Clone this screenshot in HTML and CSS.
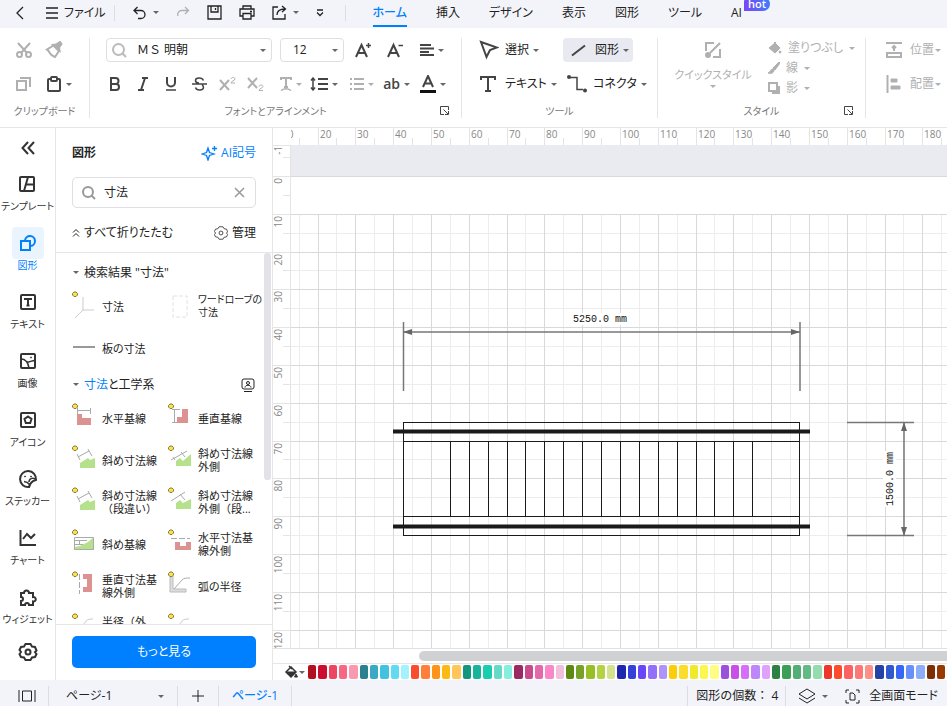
FILE: index.html
```html
<!DOCTYPE html>
<html lang="ja">
<head>
<meta charset="utf-8">
<title>ページ-1</title>
<link rel="stylesheet" href="styles.css">
</head>
<body>
<header class="topbar">
  <button class="tb back" aria-label="戻る"><svg width="10" height="14"><path d="M8 1 2 7l6 6"/></svg></button>
  <button class="tb file"><svg width="12" height="12"><path d="M0 1h12M0 6h12M0 11h12"/></svg>ファイル</button>
  <span class="sep"></span>
  <div class="quick">
    <button class="tb" aria-label="元に戻す"><svg width="14" height="14"><path d="M4.500 1 1 4.500 4.500 8M1 4.500h7a4 4 0 0 1 0 8H5"/></svg><i class="caret"></i></button>
    <button class="tb off" aria-label="やり直し"><svg width="14" height="14"><path d="M9 1l3.500 3.500L9 8M12.500 4.500H6a4 4 0 0 0-4 5.500"/></svg></button>
    <button class="tb" aria-label="保存"><svg width="15" height="15"><path d="M1 1h13v13H1zM4 1v6h7V1M8.500 3v2"/></svg></button>
    <button class="tb" aria-label="印刷"><svg width="16" height="15"><path d="M4 4V1h8v3M4 11H1V4h14v7h-3M4 8.500h8V14H4zM11 6.500h2"/></svg></button>
    <button class="tb" aria-label="書き出し"><svg width="15" height="15"><path d="M6 2H1v12h12V9M5 10c0-4 3-6 8-6M10 1l3.500 3L10 7"/></svg><i class="caret"></i></button>
    <button class="tb" aria-label="その他"><svg width="8" height="8"><path d="M1 1h6M1 3.500l3 3 3-3"/></svg></button>
  </div>
  <span class="sep"></span>
  <nav class="tabs">
    <a href="#" class="active">ホーム</a><a href="#">挿入</a><a href="#">デザイン</a><a href="#">表示</a><a href="#">図形</a><a href="#">ツール</a><a href="#" class="ai">AI<span class="hot">hot</span></a>
  </nav>
</header>

<section class="ribbon">
  <div class="group clip">
    <div class="row">
      <button class="ic off" aria-label="切り取り"><svg width="18" height="18" class="b"><circle cx="4.500" cy="13.500" r="2.500"/><circle cx="13.500" cy="13.500" r="2.500"/><path d="M3 2l9 10M15 2 6 12"/></svg></button>
      <button class="ic off" aria-label="書式のコピー"><svg width="18" height="18" class="b"><path d="M8.500 4.500 2 8.500c2 1 2 3 4 5 1 1 3 2 4 2.500l4-6z"/><path class="f" d="M8 4l3-.5L15 1l1.500 2L14 6.500l.5 3z"/></svg></button>
    </div>
    <div class="row">
      <button class="ic off" aria-label="コピー"><svg width="16" height="16" class="b"><path d="M1 5h9v9H1zM4 2h10v9"/></svg></button>
      <button class="ic" aria-label="貼り付け"><svg width="16" height="16" class="b"><rect x="2" y="3" width="12" height="12" rx="1"/><rect x="5" y="1" width="6" height="4" rx="1" fill="#fff"/></svg><i class="caret"></i></button>
    </div>
    <div class="foot">クリップボード</div>
  </div>

  <div class="group font">
    <div class="row">
      <label class="combo family"><svg width="15" height="15" class="pale"><circle cx="6.500" cy="6.500" r="5.500"/><path d="M10.500 10.500l3.500 3.500"/></svg><select aria-label="フォント"><option>ＭＳ 明朝</option></select><i class="caret"></i></label>
      <label class="combo size"><select aria-label="サイズ"><option>12</option></select><i class="caret"></i></label>
      <button class="mid" aria-label="拡大"><svg width="17" height="16" class="b"><path d="M1 15 6.500 3 12 15M3 11h7"/><path class="m" d="M13.500 1v5M11 3.500h5"/></svg></button>
      <button class="mid" aria-label="縮小"><svg width="17" height="16" class="b"><path d="M1 15 6.500 3 12 15M3 11h7"/><path class="m" d="M11.500 3.500h4.500"/></svg></button>
      <button class="drop" aria-label="揃え"><svg width="14" height="12" class="b"><path d="M0 1h11M0 4.500h14M0 8h9M0 11h14"/></svg><i class="caret"></i></button>
    </div>
    <div class="row marks">
      <button class="sm" aria-label="太字"><svg width="12" height="14" class="h"><path d="M2 1h4.500a3 3 0 0 1 0 6H2zM2 7h5a3 3 0 0 1 0 6H2z"/></svg></button>
      <button class="sm" aria-label="斜体"><svg width="12" height="14" class="b"><path d="M5 1h6M1 13h6M8 1 4 13"/></svg></button>
      <button class="sm" aria-label="下線"><svg width="12" height="14" class="b"><path d="M2 0v5.500a4 4 0 0 0 8 0V0"/><path class="m" d="M1 13h10"/></svg></button>
      <button class="sm" aria-label="取り消し線"><svg width="15" height="14"><path class="m" d="M11.500 3.500C10 0 3.500.5 3.500 3.500 3.500 5 5 6 7 6M0 7h15M3.500 10.500c1 3.500 8 3 8 0 0-1-.5-2-1.500-2.500"/></svg></button>
      <button class="sm off" aria-label="上付き"><svg width="17" height="14" class="b"><path d="M1 3l9 10M10 3 1 13"/><path class="t" d="M12 2c0-2 4-2 4 0 0 1.500-4 2-4 4h4"/></svg></button>
      <button class="sm off" aria-label="下付き"><svg width="17" height="14" class="b"><path d="M1 1l9 10M10 1 1 11"/><path class="t" d="M12 9.500c0-2 4-2 4 0 0 1.500-4 2-4 4h4"/></svg></button>
      <button class="drop off" aria-label="文字の変形"><svg width="12" height="14" class="b"><path d="M1 3V1h10v2M6 1v9M4 10h4"/><path class="m" d="M1 13.500c3-2 7-2 10 0"/></svg><i class="caret"></i></button>
      <button class="drop" aria-label="行間"><svg width="18" height="14"><path class="m" d="M3 1v12M1 3.500l2-2.500 2 2.500M1 10.500 3 13l2-2.500"/><path class="b" d="M8 2h10M8 7h10M8 12h10"/></svg><i class="caret"></i></button>
      <button class="drop off" aria-label="箇条書き"><svg width="14" height="12" class="b"><path d="M0 1h2M0 6h2M0 11h2M4 1h10M4 6h10M4 11h10"/></svg><i class="caret"></i></button>
      <button class="drop ab">ab<i class="caret"></i></button>
      <button class="drop" aria-label="文字色"><svg width="16" height="18" class="b"><path d="M3 12 8 1l5 11M5 8.500h6"/><path d="M0 16.500h16" class="ink"/></svg><i class="caret"></i></button>
    </div>
    <div class="foot">フォントとアラインメント<button class="launch" aria-label="詳細"><svg width="9" height="9"><path d="M4 8.500H.5V.5h8V4M3.500 3.500l4.500 4.500M8.500 5v3.500H5"/></svg></button></div>
  </div>

  <div class="group tools">
    <div class="row">
      <button class="tool"><svg width="20" height="20" class="b"><path d="M2 2l16 5.500-7 2.500-3.500 7z"/></svg>選択<i class="caret"></i></button>
      <button class="tool on"><svg width="20" height="16" class="b"><path d="M3 13.500 16 3.500"/></svg>図形<i class="caret"></i></button>
    </div>
    <div class="row">
      <button class="tool"><svg width="20" height="18" class="b"><path d="M2 5V2h14v3M9 2v14M6 16h6"/></svg>テキスト<i class="caret"></i></button>
      <button class="tool"><svg width="20" height="18"><path class="m" d="M3 2.500h7v12h6"/><circle class="f b" cx="2" cy="2" r="1"/><circle class="f b" cx="18" cy="15.500" r="1"/></svg>コネクタ<i class="caret"></i></button>
    </div>
    <div class="foot">ツール</div>
  </div>

  <div class="group styles">
    <div class="stylebox">
      <button class="qs off"><svg width="18" height="18" class="b"><path d="M10 2H2v8M16 8v8H9M6 12 16 2"/><circle class="f" cx="4" cy="14" r="2"/></svg><span>クイックスタイル</span><i class="caret"></i></button>
      <div class="trio">
        <button class="mini off"><svg width="14" height="14"><path class="f" d="M1 7l6-5 5 5-5 5z"/><path class="b" d="M7 7V1"/><circle class="f" cx="12" cy="11" r="1"/></svg>塗りつぶし<i class="caret"></i></button>
        <button class="mini off"><svg width="12" height="12"><path class="f" d="M11 0 5 6l2 2 5-7zM5 7c-3 0-2 3-5 4 3 1 6 0 6-3z"/></svg>線<i class="caret"></i></button>
        <button class="mini off"><svg width="12" height="12" class="b"><path d="M1 1h8v8H1zM11 4v7H4"/></svg>影<i class="caret"></i></button>
      </div>
    </div>
    <div class="foot">スタイル<button class="launch" aria-label="詳細"><svg width="9" height="9"><path d="M4 8.500H.5V.5h8V4M3.500 3.500l4.500 4.500M8.500 5v3.500H5"/></svg></button></div>
  </div>

  <div class="group arrange">
    <div class="row"><button class="tool off"><svg width="16" height="16" class="b"><path d="M0 1h16M8 9V4M6 6l2-2 2 2M1 11h14v4H1z"/></svg>位置<i class="caret"></i></button></div>
    <div class="row"><button class="tool off"><svg width="16" height="18" class="b"><path d="M1.500 0v18"/><path class="f t" d="M5 4h6v3H5zM5 11h9v3H5z"/></svg>配置<i class="caret"></i></button></div>
  </div>
</section>

<main class="work">
  <nav class="rail">
    <button class="fold" aria-label="折りたたむ"><svg width="14" height="14" class="b"><path d="M7 1 1.500 7 7 13M13 1 7.500 7 13 13"/></svg></button>
    <a href="#"><span class="box"><svg width="18" height="18" class="b"><rect x="2" y="2" width="14" height="14" rx="1"/><path d="M10 2 6 16M8 9.500h8"/></svg></span>テンプレート</a>
    <a href="#" class="sel"><span class="box"><svg width="18" height="18" class="b"><path d="M2 7h9v9H2zM6 6.500a5 5 0 1 1 5.500 5.500"/></svg></span>図形</a>
    <a href="#"><span class="box"><svg width="18" height="18" class="b"><rect x="2" y="2" width="14" height="14" rx="1"/><path d="M6 7V6h6v1M9 6v6M7.500 12.500h3"/></svg></span>テキスト</a>
    <a href="#"><span class="box"><svg width="18" height="18" class="b"><rect x="2" y="2" width="14" height="14" rx="1"/><path class="m" d="M2 7c5 0 7 3 8 9M8 9.500c2 1.500 4-1 8-1"/><circle class="f t" cx="12" cy="5.500" r=".5"/></svg></span>画像</a>
    <a href="#"><span class="box"><svg width="18" height="18" class="b"><rect x="2" y="2" width="14" height="14" rx="1"/><path d="M9 5.500 12.500 8l-1.300 4H6.800L5.500 8z"/></svg></span>アイコン</a>
    <a href="#"><span class="box"><svg width="20" height="20" class="b"><path d="M11 18a8 8 0 1 1 7-7c-4 1-6 3-7 7z"/><path class="m" d="M11 18c2-1 0-5-5-5.500M18 11c-2-3-7-2-7 2"/><circle class="f t" cx="7" cy="7.500" r=".5"/><circle class="f t" cx="13" cy="7.500" r=".5"/></svg></span>ステッカー</a>
    <a href="#"><span class="box"><svg width="18" height="18" class="b"><path d="M1.500 1v15H17M4 10l4-5 4 4 4-4"/></svg></span>チャート</a>
    <a href="#"><span class="box"><svg width="18" height="18" class="b"><path d="M2 5h3a2.500 2.500 0 1 1 5 0h4v4a2.300 2.300 0 1 1 0 4.500V17h-4a2 2 0 0 0-4 0H2v-4a2 2 0 0 0 0-4z"/></svg></span>ウィジェット</a>
    <a href="#" aria-label="設定"><span class="box"><svg width="20" height="20" class="b"><use href="#gear"/></svg></span></a>
  </nav>

  <aside class="panel">
    <div class="head"><h2>図形</h2><a href="#" class="aisym"><svg width="17" height="16" class="b"><path d="M7 3l1.500 4.500L13 9l-4.500 1.500L7 15l-1.500-4.500L1 9l4.500-1.500zM13.500 1v5M11 3.500h5"/></svg>AI記号</a></div>
    <label class="search"><svg width="14" height="14" class="b"><circle cx="6" cy="6" r="5"/><path d="M9.500 9.500 13 13"/></svg><input type="text" value="寸法" aria-label="図形を検索"><button aria-label="クリア"><svg width="11" height="11"><path class="m" d="M1 1l9 9M10 1l-9 9"/></svg></button></label>
    <div class="ops"><button><svg width="8" height="10"><path d="M1 4.500 4 1.500l3 3M1 8.500l3-3 3 3"/></svg>すべて折りたたむ</button><button><svg width="14" height="14" viewBox="1 1 18 18"><use href="#gear"/></svg>管理</button></div>
    <div class="list">
      <div class="scroll">
        <h3><i class="caret"></i>検索結果 "寸法"</h3>
        <ul>
          <li><svg width="32" height="32"><path class="ln" d="M11 7v13M11 20h11M11 20l-8 8"/><use href="#pin"/></svg><span>寸法</span></li>
          <li><svg width="32" height="32"><rect x="5" y="6" width="14" height="21" fill="none" stroke="#e2e2e2" stroke-dasharray="4 2"/></svg><span class="long">ワードローブの<br>寸法</span></li>
          <li><svg width="32" height="32"><path d="M1 15h22" stroke="#999" stroke-width="2"/></svg><span>板の寸法</span></li>
        </ul>
        <h3><i class="caret"></i><span><em>寸法</em>と工学系</span><svg class="badge" width="14" height="14"><rect x="1" y="1" width="12" height="10" rx="2"/><path d="M3 13.500h8M4 9.500c0-3 6-3 6 0"/><circle cx="7" cy="5" r="1.500"/></svg></h3>
        <ul>
          <li><svg width="32" height="32"><path class="dim" d="M5.500 8.500h13M5.500 6v6M18.500 6v6"/><path class="red" d="M5 12h5v4h9v7H5z"/><use href="#pin"/></svg><span>水平基線</span></li>
          <li><svg width="32" height="32"><path class="dim" d="M6.500 8v13M4 7.500h8M4 20.500h5"/><path class="red" d="M14 7h6v14H9v-6h5z"/><use href="#pin"/></svg><span>垂直基線</span></li>
          <li><svg width="32" height="32"><path class="dim" d="M6 13 17 7M5 10l3 6M16 5l4 7"/><path class="green" d="M8 24v-5l8-5 2 2 5-2v10z"/><use href="#pin"/></svg><span>斜め寸法線</span></li>
          <li><svg width="32" height="32"><path class="dim" d="M3 16 19 7M13 8l4 5M5 13l2 3"/><path class="green" d="M8 22v-5l4-3 3 3 8-7v12z"/><use href="#pin"/></svg><span>斜め寸法線<br>外側</span></li>
          <li><svg width="32" height="32"><path class="dim" d="M6 13 17 7M5 10l3 6M16 5l4 7"/><path class="green" d="M8 24v-5l8-5 2 2 5-2v10z"/><use href="#pin"/></svg><span class="full-width">斜め寸法線<br>（段違い）</span></li>
          <li><svg width="32" height="32"><path class="dim" d="M3 15 17 6M12 8l5 6"/><path class="green" d="M8 23v-6l4-3 3 3 8-4v10z"/><use href="#pin"/></svg><span class="full-width">斜め寸法線<br>外側（段...</span></li>
          <li><svg width="32" height="32"><path class="green" d="M2 22v-3l6-1 8-4 6-5v13z"/><path class="dim" d="M2.500 9.500h19v12h-19zM2 12.500h13M2 16.500h9M7.500 12v5"/><use href="#pin"/></svg><span>斜め基線</span></li>
          <li><svg width="32" height="32"><path class="dim" d="M3 10.500h19" stroke-dasharray="6 2"/><path class="red" d="M7 14h5v4h6v-4h5v8H7z"/><use href="#pin"/></svg><span>水平寸法基<br>線外側</span></li>
          <li><svg width="32" height="32"><path class="dim" d="M7.500 4v20" stroke-dasharray="6 2"/><path class="red" d="M11 4h9v18h-9v-5h4V9h-4z"/><use href="#pin"/></svg><span>垂直寸法基<br>線外側</span></li>
          <li><svg width="32" height="32"><path d="M2 6h3v13h13v3H2z" fill="#ddd" stroke="#bbb"/><path class="dim" d="M6 19 14 10c2-2 4-2 8-2"/><use href="#pin"/></svg><span>弧の半径</span></li>
          <li><svg width="32" height="32"><path class="ln" d="M7 19 14 9c2-2 4-2 7-2"/><use href="#pin"/></svg><span class="full-width">半径（外<br>側）</span></li>
          <li><svg width="32" height="32"><path class="ln" d="M7 19 14 9c2-2 4-2 7-2"/><use href="#pin"/></svg><span></span></li>
        </ul>
      </div>
      <div class="bar"></div>
    </div>
    <div class="more"><button>もっと見る</button></div>
  </aside>

  <section class="canvas">
    <svg id="stage" class="stage" role="img" aria-label="図面">
      <g transform="translate(-273 -128)">
        <rect class="outside" x="291" y="145" width="4000" height="31"/>
        <g id="grid"></g>
        <g id="rulers"></g>
        <g class="draw">
          <rect x="403.500" y="422.500" width="396" height="113"/>
          <path d="M403 441.500h397M403 516.500h397"/>
          <g id="treads"></g>
          <path class="rail-line" d="M393 431.500h417M393 526.500h417"/>
        </g>
        <g class="dims">
          <rect x="571" y="313" width="58" height="12"/>
          <rect x="883" y="451" width="13" height="56"/>
          <path d="M403.500 322v69M800 322v69M403 332h397M847 422.500h67M847 535.500h67M904 423v112"/>
          <path class="head" d="M403 332l9-3v6zM800 332l-9-3v6zM904 422l-3 9h6zM904 536l-3-9h6z"/>
          <text x="600" y="322">5250.0 mm</text>
          <text transform="translate(893 479) rotate(-90)">1500.0 mm</text>
        </g>
      </g>
    </svg>
    <div class="hscroll"><div></div></div>
    <div class="palette"><button aria-label="塗りつぶし"><svg width="14" height="14"><path class="m" d="M2 7l5-5 5 5-5 5zM5 1l3 3"/><path class="f" d="M2 7h10l-5 5zM12 9l1.500 3h-3z"/></svg><i class="caret"></i></button><div id="swatches" class="swatches"></div></div>
  </section>
</main>

<footer class="status">
  <button class="view" aria-label="表示"><svg width="18" height="12"><path d="M1 0v12M17 0v12M4.500 1h9v10h-9z"/></svg></button>
  <label class="page"><select aria-label="ページ"><option>ページ-1</option></select><i class="caret"></i></label>
  <button class="add" aria-label="ページを追加"><svg width="12" height="12"><path d="M6 0v12M0 6h12"/></svg></button>
  <a href="#" class="cur">ページ-1</a>
  <span class="count full-width">図形の個数： 4</span>
  <button class="layers" aria-label="レイヤー"><svg width="18" height="16"><path d="M9 1l8 5-8 5-8-5zM1 10l8 5 8-5"/></svg><i class="caret"></i></button>
  <button class="full"><svg width="15" height="15"><path d="M1 4V1h3M11 1h3v3M14 11v3h-3M4 14H1v-3M5 4h3l2 2v5H5z"/></svg>全画面モード</button>
</footer>

<svg width="0" height="0" class="defs"><defs>
  <g id="gear"><path d="M7.500 2h5l1.500 2.500 3 .5 1.500 3.500L17 10l1.500 2-1.500 3-3 .5-1.500 2.500h-5L6 15.500 3 15l-1.500-3L3 10 1.500 8 3 5l3-.5z"/><circle cx="10" cy="10" r="2.500"/></g>
  <path id="pin" d="M2 2h2l1.500 1.500v1.500L4 6.500H2L.5 5V3.500z" fill="#ffe14d" stroke="#857b3c"/>
</defs></svg>
<script src="script.js"></script>
</body>
</html>
```
FILE: styles.css
```css
* { box-sizing: border-box; }
body {
  margin: 0; height: 100vh; display: flex; flex-direction: column; overflow: hidden;
  font: 12px/16px "Open Sans", "Noto Sans CJK JP", sans-serif;
  font-feature-settings: "palt"; color: #222; background: #fff;
}
button, select, input { font: inherit; font-feature-settings: inherit; color: inherit; background: none; border: 0; padding: 0; margin: 0; outline: 0; }
button { display: flex; align-items: center; white-space: nowrap; }
a { color: inherit; text-decoration: none; white-space: nowrap; }
svg { fill: none; stroke: currentColor; stroke-width: 1; flex: none; display: block; }
svg.b, svg .b { stroke-width: 2; }
svg.h { stroke-width: 2; }
svg .m { stroke-width: 1.5; }
svg .t { stroke-width: 1; }
svg .f { fill: currentColor; }
svg .ink { stroke: #111; stroke-width: 3; }
select { appearance: none; }
.defs { position: absolute; }
.full-width { font-feature-settings: normal; }
.caret { flex: none; width: 0; height: 0; border: 3px solid transparent; border-top-color: #666; border-bottom: 0; }
.off { color: #b0b0b0; }
.off .caret { border-top-color: #b0b0b0; }

.topbar { flex: none; height: 28px; display: flex; align-items: center; background: #f3f4f9; padding-bottom: 3px; }
.topbar svg { stroke-width: 1.3; }
.back { margin-left: 15px; }
.file { margin-left: 21px; gap: 6px; }
.sep { width: 1px; height: 16px; background: #dcdde2; margin-left: 8px; }
.quick { display: flex; align-items: center; gap: 17px; margin-left: 18px; }
.quick .tb { gap: 6px; }
.quick + .sep { margin-left: 21px; }
.tabs { display: flex; gap: 29px; margin-left: 27px; align-self: stretch; }
.tabs a { height: 27px; line-height: 25px; border-bottom: 2px solid transparent; }
.tabs .active { color: #007fff; border-color: #007fff; font-weight: 500; }
.ai { position: relative; }
.hot { position: absolute; left: 13px; top: -3px; height: 14px; padding: 0 4px; line-height: 14px; border-radius: 5px 7px 7px 0; color: #fff; font-size: 11px; font-weight: 600; background: linear-gradient(90deg, #7a45f5, #3f7dfb); }

.ribbon { flex: none; height: 100px; display: flex; padding-top: 10px; border-bottom: 1px solid #e6e6e9; color: #444; overflow: hidden; }
.group { flex: none; height: 80px; border-right: 1px solid #e6e6e9; display: flex; flex-direction: column; }
.row { height: 24px; display: flex; align-items: center; margin-bottom: 10px; }
.foot { height: 14px; margin-top: -2px; line-height: 14px; font-size: 10px; color: #777; text-align: center; position: relative; white-space: nowrap; }
.launch { position: absolute; right: 12px; top: 2px; color: #444; }
.clip { width: 90px; padding-left: 9px; }
.clip .foot { margin-left: -9px; }
.ic { width: 30px; height: 24px; justify-content: center; gap: 4px; }
.ic:has(.caret) { width: 40px; }
.font { width: 372px; padding-left: 16px; }
.font .foot { margin-left: -16px; }
.combo { display: flex; align-items: center; height: 24px; border: 1px solid #dedee3; border-radius: 4px; padding: 0 5px; }
.combo select { flex: 1; min-width: 0; color: #222; font-feature-settings: normal; }
.family { width: 166px; gap: 10px; margin-right: 8px; }
.family .pale { color: #bbb; stroke-width: 2; }
.size { width: 64px; padding-left: 12px; margin-right: 3px; }
.mid { width: 32px; height: 24px; justify-content: center; }
.marks { margin-left: -5px; }
.sm { width: 28px; height: 24px; justify-content: center; }
.drop { width: 36px; height: 24px; justify-content: flex-end; gap: 4px; padding-right: 3px; }
.ab { font: 600 14px/20px "Open Sans", sans-serif; }
.tools { width: 196px; padding-left: 17px; }
.tools .foot { margin-left: -17px; }
.tool { height: 24px; gap: 6px; border-radius: 4px; color: #222; }
.tool svg { color: #444; }
.tool .caret { margin-left: -2px; }
.tools .tool { width: 84px; }
.tools .on { width: 70px; padding-left: 6px; background: #e9eaf1; }
.tools .tool + .tool:not(.on) { margin-left: 4px; }
.styles { width: 208px; }
.stylebox { height: 68px; display: flex; }
.qs { flex-direction: column; width: 110px; font-size: 11px; padding-top: 3px; gap: 8px; }
.qs .caret { margin-top: -6px; }
.trio { display: flex; flex-direction: column; }
.mini { height: 20px; gap: 6px; }
.tool.off, .tool.off svg { color: #b0b0b0; }
.arrange { flex: 1; border: 0; padding-left: 20px; }
.arrange .tool { gap: 8px; }
.arrange .caret { margin-left: -7px; }

.work { flex: 1; min-height: 0; display: flex; }
.rail { flex: none; width: 56px; border-right: 1px solid #e6e6e9; display: flex; flex-direction: column; align-items: center; gap: 15px; color: #333; overflow: hidden; }
.rail a { height: 44px; flex: none; display: flex; flex-direction: column; align-items: center; font-size: 10px; line-height: 12px; }
.fold { height: 25px; padding-top: 15px; flex: none; }
.box { width: 32px; height: 32px; flex: none; border-radius: 4px; display: flex; align-items: center; justify-content: center; }
.rail .sel { color: #007fff; }
.sel .box { background: #e9f4ff; }
.rail a:last-child { margin-top: -4px; }

.panel { flex: none; width: 217px; border-right: 1px solid #e6e6e9; display: flex; flex-direction: column; }
.head, .search, .ops { margin: 0 16px; display: flex; align-items: center; justify-content: space-between; flex: none; }
.head { height: 49px; }
h2, h3 { margin: 0; font-size: 12px; }
h2 { font-weight: 600; }
.aisym { display: flex; align-items: center; gap: 3px; color: #007fff; }
.aisym svg.b { stroke-width: 1.3; }
.search { height: 31px; border: 1px solid #dedee3; border-radius: 5px; padding: 0 10px 0 9px; color: #999; gap: 8px; }
.search input { flex: 1; min-width: 0; color: #222; }
.ops { height: 44px; padding-top: 6px; }
.ops button { gap: 4px; }
.list { flex: 1; min-height: 0; display: flex; overflow: hidden; border-top: 1px solid #e6e6e9; border-bottom: 1px solid #e6e6e9; }
.scroll { flex: 1; padding: 4px 0 0 16px; overflow: hidden; }
.bar { width: 7px; height: 227px; border-radius: 3px; background: #e2e2e8; margin-right: 1px; }
h3 { height: 28px; padding-top: 3px; display: flex; align-items: center; gap: 5px; font-weight: 400; white-space: nowrap; }
h3 .caret { margin-left: 1px; }
h3 em { font-style: normal; color: #007fff; }
.badge { margin-left: auto; margin-right: 9px; }
ul { list-style: none; margin: 0; padding: 0; display: grid; grid-template-columns: 96px 96px; grid-auto-rows: 42px; }
li { display: flex; align-items: center; font-size: 11px; line-height: 13px; white-space: nowrap; }
li svg { width: 30px; }
.long { font-size: 10px; }
.ln { stroke: #ccc; }
.dim { stroke: #aaa; }
.red { fill: #dd9292; stroke: none; }
.green { fill: #b5e08c; stroke: none; }
.more { flex: none; height: 55px; padding: 11px 16px; }
.more button { width: 100%; height: 32px; justify-content: center; background: #007fff; color: #fff; border-radius: 5px; }

.canvas { flex: 1; min-width: 0; display: flex; flex-direction: column; }
.stage { flex: 1; min-height: 0; width: 100%; border-bottom: 1px solid #e0e0e0; }
.outside { fill: #eaebf0; stroke: none; }
.tick { stroke: #e4e4e6; }
.major { stroke: #d9d9db; }
.minor { stroke: #ededee; }
.num { font-size: 10px; fill: #888; stroke: none; }
.draw { stroke: #1a1a1a; }
.rail-line { stroke: #1a1a1a; stroke-width: 4; }
.dims { stroke: #777; stroke-width: 1.5; }
.dims rect { fill: #fff; stroke: none; }
.dims .head { fill: #666; stroke: none; }
.dims text { font: 10px "Liberation Mono", monospace; fill: #111; stroke: none; text-anchor: middle; }
.hscroll { flex: none; height: 14px; padding: 2px 0 0 146px; }
.hscroll div { height: 10px; background: #d0d1d3; border-radius: 5px 0 0 5px; }
.palette { flex: none; height: 17px; border-top: 1px solid #e6e6e9; display: flex; align-items: center; padding: 0 2px 0 11px; }
.palette button { width: 24px; gap: 1px; color: #333; }
.swatches { flex: 1; display: flex; gap: 2px; height: 14px; }
.swatches i { flex: 1; border-radius: 2px; }

.status { flex: none; height: 26px; display: flex; align-items: center; background: #f3f4f9; padding-top: 6px; white-space: nowrap; }
.status > * { height: 20px; border-right: 1px solid #dcdde2; display: flex; align-items: center; justify-content: center; }
.view { width: 49px; padding-left: 6px; }
.page { width: 129px; padding: 0 13px 0 17px; }
.page select { flex: 1; min-width: 0; }
.add { width: 41px; }
.cur { width: 73px; color: #007fff; font-weight: 500; }
.count { margin-left: auto; padding: 0 7px 0 8px; border-left: 1px solid #dcdde2; }
.status .layers { border: 0; gap: 6px; padding-left: 12px; }
.status .full { border: 0; gap: 9px; padding: 0 9px 0 17px; }
```
FILE: script.js
```js
const NS = 'http://www.w3.org/2000/svg';
const STEP = 37.795;
const gx = v => Math.floor(318.1 + (v - 20) / 10 * STEP);
const gy = v => Math.floor(176.5 + v / 10 * STEP);

function line(parent, x1, y1, x2, y2, cls) {
  const el = document.createElementNS(NS, 'path');
  el.setAttribute('d', `M${x1} ${y1}L${x2} ${y2}`);
  if (cls) el.setAttribute('class', cls);
  document.getElementById(parent).append(el);
}
function num(text, attrs) {
  const el = document.createElementNS(NS, 'text');
  el.textContent = text;
  el.setAttribute('class', 'num');
  for (const k in attrs) el.setAttribute(k, attrs[k]);
  document.getElementById('rulers').append(el);
}

const stage = document.getElementById('stage').getBoundingClientRect();
const right = 273 + stage.width;
const bottom = 128 + stage.height;

// Minor lines first so the major ones stay on top of them
for (const pass of ['minor', 'major']) {
  const start = pass === 'minor' ? 15 : 20;
  for (let v = start; gx(v) < right; v += 10) line('grid', gx(v) + .5, 214, gx(v) + .5, bottom, pass);
  for (let v = pass === 'minor' ? 15 : 10; gy(v) < bottom; v += 10) line('grid', 291, gy(v) + .5, right, gy(v) + .5, pass);
}
line('grid', 291, 176.5, right, 176.5, 'major');

line('rulers', 290.5, 145, 290.5, bottom, 'tick');
line('rulers', 273, 145.5, 291, 145.5, 'tick');
for (let v = 15; gx(v) < right; v += 5) line('rulers', gx(v) + .5, v % 10 ? 138 : 128, gx(v) + .5, 145, 'tick');
for (let v = -5; gy(v) < bottom; v += 5) line('rulers', v % 10 ? 283 : 273, gy(v) + .5, 290, gy(v) + .5, 'tick');

document.getElementById('rulers').insertAdjacentHTML('beforebegin',
  '<clipPath id="hc"><rect x="291" y="128" width="4000" height="17"/></clipPath><clipPath id="vc"><rect x="273" y="146" width="18" height="4000"/></clipPath>');
for (let v = 10; gx(v) < right; v += 10) num(v, { x: gx(v) + 2, y: 138, 'clip-path': 'url(#hc)' });
for (let v = -10; gy(v) < bottom; v += 10) {
  const g = document.createElementNS(NS, 'g');
  g.setAttribute('clip-path', 'url(#vc)');
  document.getElementById('rulers').append(g);
  num(v, { transform: `translate(282 ${gy(v) + 2}) rotate(-90)`, 'text-anchor': 'end' });
  g.append(document.getElementById('rulers').lastChild);
}

for (let k = 0; k < 17; k++) {
  const x = Math.floor(450.4 + k * STEP / 2) + .5;
  line('treads', x, 441, x, 517);
}

const colors = `b31120 ce0c30 ec4662 f96683 fb9aae 298090 39a9c4 42c2e0 62dbf2 a5f2ff
fa4d2d ff7f38 ff9318 ffb914 ffc65c 13967f 17b49b 1bcdb0 67d9c7 85eede
9c2a62 c94b8c e568ab fb86c8 f0bfdb 5f8a12 77a228 98bf24 b4d344 d4e290
1f27ae 3640dc 6a46fa 9270fa b093fa fdcd05 fddd2c f0ea2b fcf74c fffd83
9c4fdc c650e8 d56ffb bf86fb dfa2fc 2d8044 3c9f58 52ad76 62ba85 95dbae
ea382b fa4d2d fc6262 fe7876 ff9088 2742a6 3058cf 3667f7 6790fe 8aaff8 7a2f02 963a02`.split(/\s+/);
for (const c of colors) {
  const el = document.createElement('i');
  el.style.background = '#' + c;
  document.getElementById('swatches').append(el);
}
```
